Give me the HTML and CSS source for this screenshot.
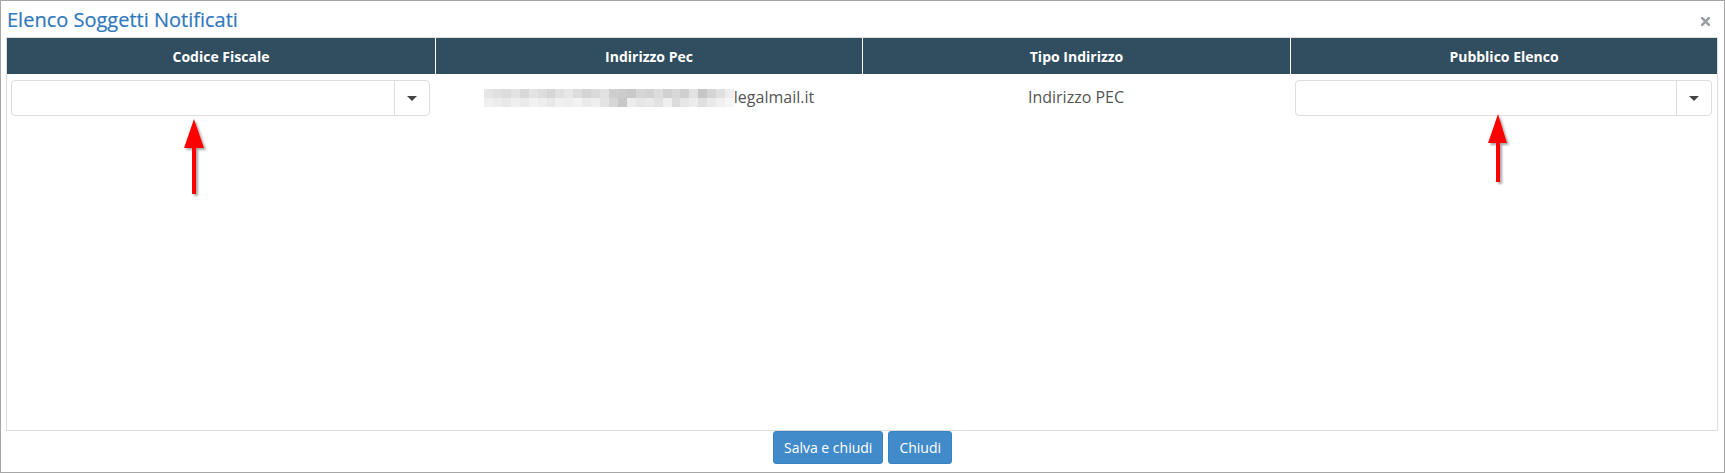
FILE: index.html
```html
<!DOCTYPE html>
<html lang="it">
<head>
<meta charset="utf-8">
<title>Elenco Soggetti Notificati</title>
<link rel="stylesheet" href="styles.css">
</head>
<body>
<div class="modal">
  <div class="modal-header">
    <h4 class="modal-title">Elenco Soggetti Notificati</h4>
    <button class="close" type="button" aria-label="Chiudi"><svg width="9" height="9" viewBox="0 0 9 9"><path d="M1.2 1.2 L7.8 7.8 M7.8 1.2 L1.2 7.8" stroke="#9a9da2" stroke-width="2.6" stroke-linecap="square" fill="none"/></svg></button>
  </div>
  <div class="modal-body">
    <div class="grid">
      <div class="grid-head">
        <div class="th">Codice Fiscale</div>
        <div class="th">Indirizzo Pec</div>
        <div class="th">Tipo Indirizzo</div>
        <div class="th">Pubblico Elenco</div>
      </div>
      <div class="grid-row">
        <div class="td">
          <div class="combo"><span class="combo-input"></span><span class="combo-btn"><span class="caret"></span></span></div>
        </div>
        <div class="td td-text">
          <span class="pec"><svg class="blur" width="250" height="18" viewBox="0 0 252 18" preserveAspectRatio="none" shape-rendering="crispEdges">
            <rect x="0" y="0" width="9" height="9" fill="#e6e6e6"/><rect x="9" y="0" width="9" height="9" fill="#e0e0e0"/><rect x="18" y="0" width="9" height="9" fill="#dcdcdc"/><rect x="27" y="0" width="9" height="9" fill="#e2e2e2"/><rect x="36" y="0" width="9" height="9" fill="#d8d8d8"/><rect x="45" y="0" width="9" height="9" fill="#e4e4e4"/><rect x="54" y="0" width="9" height="9" fill="#dddddd"/><rect x="63" y="0" width="9" height="9" fill="#d6d6d6"/><rect x="72" y="0" width="9" height="9" fill="#e0e0e0"/><rect x="81" y="0" width="9" height="9" fill="#e8e8e8"/><rect x="90" y="0" width="9" height="9" fill="#dddddd"/><rect x="99" y="0" width="9" height="9" fill="#d4d4d4"/><rect x="108" y="0" width="9" height="9" fill="#dadada"/><rect x="117" y="0" width="9" height="9" fill="#e1e1e1"/><rect x="126" y="0" width="9" height="9" fill="#cecece"/><rect x="135" y="0" width="9" height="9" fill="#cccccc"/><rect x="144" y="0" width="9" height="9" fill="#c8c8c8"/><rect x="153" y="0" width="9" height="9" fill="#d6d6d6"/><rect x="162" y="0" width="9" height="9" fill="#d2d2d2"/><rect x="171" y="0" width="9" height="9" fill="#dcdcdc"/><rect x="180" y="0" width="9" height="9" fill="#d0d0d0"/><rect x="189" y="0" width="9" height="9" fill="#d8d8d8"/><rect x="198" y="0" width="9" height="9" fill="#cfcfcf"/><rect x="207" y="0" width="9" height="9" fill="#e2e2e2"/><rect x="216" y="0" width="9" height="9" fill="#c6c6c6"/><rect x="225" y="0" width="9" height="9" fill="#d4d4d4"/><rect x="234" y="0" width="9" height="9" fill="#e0e0e0"/><rect x="243" y="0" width="9" height="9" fill="#eeeeee"/>
            <rect x="0" y="9" width="9" height="9" fill="#f0f0f0"/><rect x="9" y="9" width="9" height="9" fill="#ececec"/><rect x="18" y="9" width="9" height="9" fill="#e8e8e8"/><rect x="27" y="9" width="9" height="9" fill="#eeeeee"/><rect x="36" y="9" width="9" height="9" fill="#eaeaea"/><rect x="45" y="9" width="9" height="9" fill="#f2f2f2"/><rect x="54" y="9" width="9" height="9" fill="#eeeeee"/><rect x="63" y="9" width="9" height="9" fill="#e8e8e8"/><rect x="72" y="9" width="9" height="9" fill="#f0f0f0"/><rect x="81" y="9" width="9" height="9" fill="#eeeeee"/><rect x="90" y="9" width="9" height="9" fill="#f2f2f2"/><rect x="99" y="9" width="9" height="9" fill="#eaeaea"/><rect x="108" y="9" width="9" height="9" fill="#eeeeee"/><rect x="117" y="9" width="9" height="9" fill="#e4e4e4"/><rect x="126" y="9" width="9" height="9" fill="#d6d6d6"/><rect x="135" y="9" width="9" height="9" fill="#c8c8c8"/><rect x="144" y="9" width="9" height="9" fill="#ececec"/><rect x="153" y="9" width="9" height="9" fill="#e6e6e6"/><rect x="162" y="9" width="9" height="9" fill="#eaeaea"/><rect x="171" y="9" width="9" height="9" fill="#e2e2e2"/><rect x="180" y="9" width="9" height="9" fill="#eeeeee"/><rect x="189" y="9" width="9" height="9" fill="#dcdcdc"/><rect x="198" y="9" width="9" height="9" fill="#e6e6e6"/><rect x="207" y="9" width="9" height="9" fill="#ececec"/><rect x="216" y="9" width="9" height="9" fill="#e0e0e0"/><rect x="225" y="9" width="9" height="9" fill="#eaeaea"/><rect x="234" y="9" width="9" height="9" fill="#f0f0f0"/><rect x="243" y="9" width="9" height="9" fill="#f6f6f6"/>
          </svg>legalmail.it</span>
        </div>
        <div class="td td-text">Indirizzo PEC</div>
        <div class="td">
          <div class="combo"><span class="combo-input"></span><span class="combo-btn"><span class="caret"></span></span></div>
        </div>
      </div>
    </div>
  </div>
  <div class="modal-footer">
    <button class="btn" type="button">Salva e chiudi</button>
    <button class="btn" type="button">Chiudi</button>
  </div>

  <svg class="arrow arrow-1" width="34" height="90" viewBox="0 0 34 90">
    <defs><filter id="sh" x="-50%" y="-20%" width="200%" height="140%"><feDropShadow dx="2" dy="2" stdDeviation="1.2" flood-color="#000" flood-opacity="0.35"/></filter></defs>
    <polygon filter="url(#sh)" fill="#ff0000" points="16,7 26,36 18,36 18,82 14,82 14,36 6,36"/>
  </svg>
  <svg class="arrow arrow-2" width="34" height="82" viewBox="0 0 34 82">
    <defs><filter id="sh2" x="-50%" y="-20%" width="200%" height="140%"><feDropShadow dx="2" dy="2" stdDeviation="1.2" flood-color="#000" flood-opacity="0.35"/></filter></defs>
    <polygon filter="url(#sh2)" fill="#ff0000" points="16,7 25,36 18,36 18,75 14,75 14,36 6,36"/>
  </svg>
</div>
</body>
</html>
```

FILE: styles.css
```css
* { box-sizing: border-box; }

html, body {
  margin: 0;
  padding: 0;
  background: #ffffff;
}

body {
  font-family: "Open Sans", "Liberation Sans", sans-serif;
  font-size: 14px;
  color: #555555;
}

.modal {
  position: relative;
  width: 1725px;
  height: 473px;
  border: 1px solid #a6a6a6;
  display: flex;
  flex-direction: column;
}

.modal-header {
  display: flex;
  align-items: flex-start;
  justify-content: space-between;
  height: 36px;
  padding: 5px 14px 0 6px;
}

.modal-title {
  margin: 0;
  font-size: 20px;
  font-weight: 400;
  line-height: 28px;
  color: #2f78bd;
  -webkit-text-stroke: 0.2px #2f78bd;
}

.close {
  display: flex;
  margin: 11px 0 0 0;
  padding: 0;
  border: 0;
  background: transparent;
  cursor: pointer;
}

.modal-body {
  padding: 0 6px 0 5px;
}

.grid {
  height: 394px;
  border: 1px solid #dddddd;
}

.grid-head {
  display: grid;
  grid-template-columns: 428px 427px 428px 1fr;
  height: 36px;
  background: #314d60;
}

.th {
  display: flex;
  align-items: center;
  justify-content: center;
  color: #ffffff;
  font-weight: 700;
  font-size: 14px;
  border-left: 1px solid #ffffff;
}

.th:first-child { border-left: 0; }

.grid-row {
  display: grid;
  grid-template-columns: 428px 427px 428px 1fr;
  height: 48px;
}

.td {
  padding: 6px 5px 0 5px;
}

.td:first-child { padding-left: 4px; }

.td-text {
  display: flex;
  justify-content: center;
  align-items: flex-start;
  padding-top: 12px;
  font-size: 16px;
  line-height: 22px;
  color: #555555;
}

.pec {
  display: inline-flex;
  align-items: center;
  margin-left: 1px;
}

.blur { display: block; margin-top: 1px; }

.combo {
  display: flex;
  height: 36px;
  border: 1px solid #dddddd;
  border-radius: 4px;
  background: #ffffff;
}

.combo-input { flex: 1; }

.combo-btn {
  width: 35px;
  border-left: 1px solid #dddddd;
  display: flex;
  align-items: center;
  justify-content: center;
}

.caret {
  width: 0;
  height: 0;
  border-left: 5px solid transparent;
  border-right: 5px solid transparent;
  border-top: 5px solid #444444;
}

.modal-footer {
  display: flex;
  justify-content: center;
  gap: 5px;
  padding-top: 0;
}

.btn {
  height: 33px;
  padding: 0 10px;
  border: 1px solid #3a82c0;
  border-radius: 3px;
  background: #428bca;
  color: #ffffff;
  font-family: "Open Sans", "Liberation Sans", sans-serif;
  font-size: 14px;
  line-height: 20px;
  cursor: pointer;
}

.arrow {
  position: absolute;
}

.arrow-1 { left: 177px; top: 111px; }
.arrow-2 { left: 1481px; top: 106px; }
```
